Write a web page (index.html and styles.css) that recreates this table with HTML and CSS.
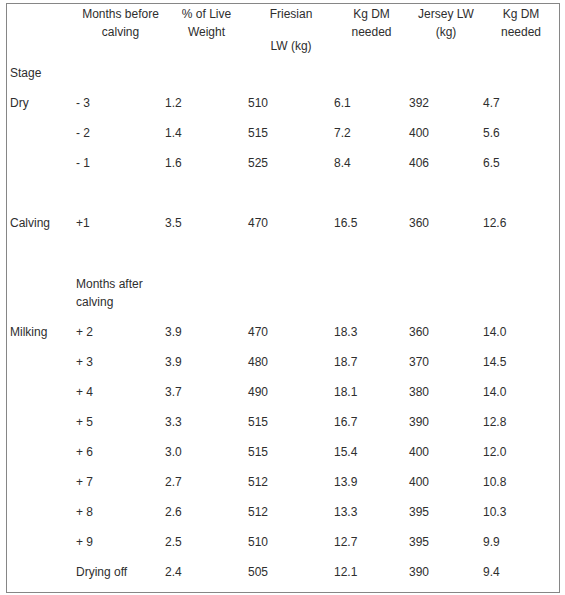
FILE: index.html
```html
<!DOCTYPE html>
<html lang="en">
<head>
<meta charset="utf-8">
<title>Feed requirements</title>
<link rel="stylesheet" href="styles.css">
</head>
<body>
<div class="frame">
  <table class="feed">
    <colgroup>
      <col class="c1"><col class="c2"><col class="c3"><col class="c4"><col class="c5"><col class="c6"><col class="c7">
    </colgroup>
    <thead>
      <tr class="head">
        <th></th>
        <th>Months before calving</th>
        <th>% of Live Weight</th>
        <th><span class="line">Friesian</span><span class="line gap">LW (kg)</span></th>
        <th>Kg DM needed</th>
        <th>Jersey LW (kg)</th>
        <th>Kg DM needed</th>
      </tr>
    </thead>
    <tbody>
      <tr><td>Stage</td><td></td><td></td><td></td><td></td><td></td><td></td></tr>
      <tr><td>Dry</td><td>- 3</td><td>1.2</td><td>510</td><td>6.1</td><td>392</td><td>4.7</td></tr>
      <tr><td></td><td>- 2</td><td>1.4</td><td>515</td><td>7.2</td><td>400</td><td>5.6</td></tr>
      <tr><td></td><td>- 1</td><td>1.6</td><td>525</td><td>8.4</td><td>406</td><td>6.5</td></tr>
      <tr><td>&nbsp;</td><td></td><td></td><td></td><td></td><td></td><td></td></tr>
      <tr><td>Calving</td><td>+1</td><td>3.5</td><td>470</td><td>16.5</td><td>360</td><td>12.6</td></tr>
      <tr><td>&nbsp;</td><td></td><td></td><td></td><td></td><td></td><td></td></tr>
      <tr class="sub"><td></td><td>Months after calving</td><td></td><td></td><td></td><td></td><td></td></tr>
      <tr><td>Milking</td><td>+ 2</td><td>3.9</td><td>470</td><td>18.3</td><td>360</td><td>14.0</td></tr>
      <tr><td></td><td>+ 3</td><td>3.9</td><td>480</td><td>18.7</td><td>370</td><td>14.5</td></tr>
      <tr><td></td><td>+ 4</td><td>3.7</td><td>490</td><td>18.1</td><td>380</td><td>14.0</td></tr>
      <tr><td></td><td>+ 5</td><td>3.3</td><td>515</td><td>16.7</td><td>390</td><td>12.8</td></tr>
      <tr><td></td><td>+ 6</td><td>3.0</td><td>515</td><td>15.4</td><td>400</td><td>12.0</td></tr>
      <tr><td></td><td>+ 7</td><td>2.7</td><td>512</td><td>13.9</td><td>400</td><td>10.8</td></tr>
      <tr><td></td><td>+ 8</td><td>2.6</td><td>512</td><td>13.3</td><td>395</td><td>10.3</td></tr>
      <tr><td></td><td>+ 9</td><td>2.5</td><td>510</td><td>12.7</td><td>395</td><td>9.9</td></tr>
      <tr><td></td><td>Drying off</td><td>2.4</td><td>505</td><td>12.1</td><td>390</td><td>9.4</td></tr>
    </tbody>
  </table>
</div>
</body>
</html>
```

FILE: styles.css
```css
html, body {
  margin: 0;
  padding: 0;
  background: #ffffff;
}

body {
  font-family: "Liberation Sans", Arial, sans-serif;
  font-size: 12px;
  line-height: 18px;
  color: #2e2e2e;
}

.frame {
  margin: 3px 0 0 6px;
  width: 554px;
  height: 590px;
  box-sizing: border-box;
  border: 1px solid #868686;
  padding: 1px 0 0 3px;
}

.feed {
  width: 549px;
  table-layout: fixed;
  border-collapse: collapse;
  border-spacing: 0;
}

.c1 { width: 66px; }
.c2 { width: 89px; }
.c3 { width: 83px; }
.c4 { width: 86px; }
.c5 { width: 75px; }
.c6 { width: 74px; }
.c7 { width: 76px; }

.feed th {
  font-weight: normal;
  text-align: center;
  vertical-align: top;
  padding: 0 0 3px;
}

.feed th .line {
  display: block;
}

.feed th .gap {
  margin-top: 14px;
}

.feed td {
  text-align: left;
  vertical-align: top;
  padding: 6px 0;
  white-space: nowrap;
}

.feed tr.sub td {
  padding: 7px 0 6px;
  white-space: normal;
}
```
